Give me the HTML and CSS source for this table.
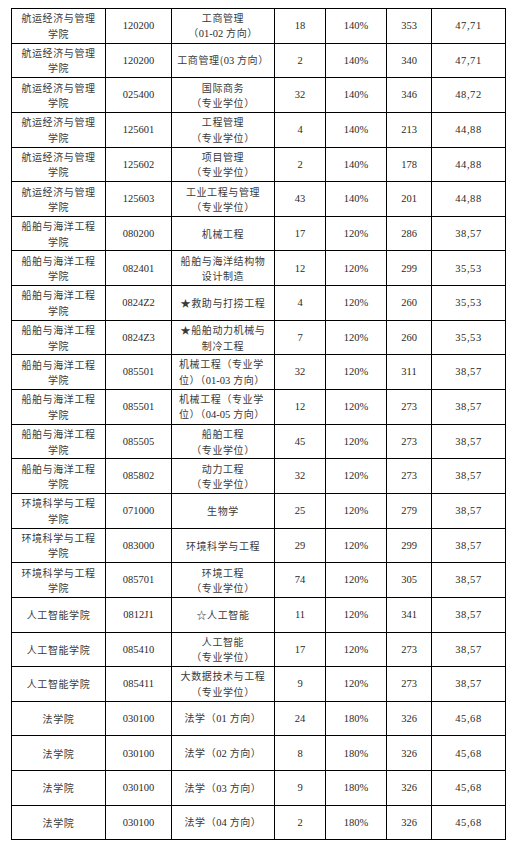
FILE: index.html
```html
<!DOCTYPE html>
<html lang="zh-CN">
<head>
<meta charset="utf-8">
<link rel="stylesheet" href="styles.css">
</head>
<body>
<table class="grid">
<colgroup>
<col class="c1"><col class="c2"><col class="c3"><col class="c4"><col class="c5"><col class="c6"><col class="c7">
</colgroup>
<tbody>
<tr><td>航运经济与管理<br>学院</td><td class="n">120200</td><td>工商管理<br>（<span class="n">01-02</span> 方向）</td><td class="n">18</td><td class="n">140%</td><td class="n">353</td><td class="n w">47,71</td></tr>
<tr><td>航运经济与管理<br>学院</td><td class="n">120200</td><td>工商管理(<span class="n">03</span> 方向）</td><td class="n">2</td><td class="n">140%</td><td class="n">340</td><td class="n w">47,71</td></tr>
<tr><td>航运经济与管理<br>学院</td><td class="n">025400</td><td>国际商务<br>（专业学位）</td><td class="n">32</td><td class="n">140%</td><td class="n">346</td><td class="n w">48,72</td></tr>
<tr><td>航运经济与管理<br>学院</td><td class="n">125601</td><td>工程管理<br>（专业学位）</td><td class="n">4</td><td class="n">140%</td><td class="n">213</td><td class="n w">44,88</td></tr>
<tr><td>航运经济与管理<br>学院</td><td class="n">125602</td><td>项目管理<br>（专业学位）</td><td class="n">2</td><td class="n">140%</td><td class="n">178</td><td class="n w">44,88</td></tr>
<tr><td>航运经济与管理<br>学院</td><td class="n">125603</td><td>工业工程与管理<br>（专业学位）</td><td class="n">43</td><td class="n">140%</td><td class="n">201</td><td class="n w">44,88</td></tr>
<tr><td>船舶与海洋工程<br>学院</td><td class="n">080200</td><td>机械工程</td><td class="n">17</td><td class="n">120%</td><td class="n">286</td><td class="n w">38,57</td></tr>
<tr><td>船舶与海洋工程<br>学院</td><td class="n">082401</td><td>船舶与海洋结构物<br>设计制造</td><td class="n">12</td><td class="n">120%</td><td class="n">299</td><td class="n w">35,53</td></tr>
<tr><td>船舶与海洋工程<br>学院</td><td class="n">0824Z2</td><td>★救助与打捞工程</td><td class="n">4</td><td class="n">120%</td><td class="n">260</td><td class="n w">35,53</td></tr>
<tr><td>船舶与海洋工程<br>学院</td><td class="n">0824Z3</td><td>★船舶动力机械与<br>制冷工程</td><td class="n">7</td><td class="n">120%</td><td class="n">260</td><td class="n w">35,53</td></tr>
<tr><td>船舶与海洋工程<br>学院</td><td class="n">085501</td><td class="left">机械工程（专业学<br>位）（<span class="n">01-03</span> 方向）</td><td class="n">32</td><td class="n">120%</td><td class="n">311</td><td class="n w">38,57</td></tr>
<tr><td>船舶与海洋工程<br>学院</td><td class="n">085501</td><td class="left">机械工程（专业学<br>位）（<span class="n">04-05</span> 方向）</td><td class="n">12</td><td class="n">120%</td><td class="n">273</td><td class="n w">38,57</td></tr>
<tr><td>船舶与海洋工程<br>学院</td><td class="n">085505</td><td>船舶工程<br>（专业学位）</td><td class="n">45</td><td class="n">120%</td><td class="n">273</td><td class="n w">38,57</td></tr>
<tr><td>船舶与海洋工程<br>学院</td><td class="n">085802</td><td>动力工程<br>（专业学位）</td><td class="n">32</td><td class="n">120%</td><td class="n">273</td><td class="n w">38,57</td></tr>
<tr><td>环境科学与工程<br>学院</td><td class="n">071000</td><td>生物学</td><td class="n">25</td><td class="n">120%</td><td class="n">279</td><td class="n w">38,57</td></tr>
<tr><td>环境科学与工程<br>学院</td><td class="n">083000</td><td>环境科学与工程</td><td class="n">29</td><td class="n">120%</td><td class="n">299</td><td class="n w">38,57</td></tr>
<tr><td>环境科学与工程<br>学院</td><td class="n">085701</td><td>环境工程<br>（专业学位）</td><td class="n">74</td><td class="n">120%</td><td class="n">305</td><td class="n w">38,57</td></tr>
<tr><td>人工智能学院</td><td class="n">0812J1</td><td>☆人工智能</td><td class="n">11</td><td class="n">120%</td><td class="n">341</td><td class="n w">38,57</td></tr>
<tr><td>人工智能学院</td><td class="n">085410</td><td>人工智能<br>（专业学位）</td><td class="n">17</td><td class="n">120%</td><td class="n">273</td><td class="n w">38,57</td></tr>
<tr><td>人工智能学院</td><td class="n">085411</td><td>大数据技术与工程<br>（专业学位）</td><td class="n">9</td><td class="n">120%</td><td class="n">273</td><td class="n w">38,57</td></tr>
<tr><td>法学院</td><td class="n">030100</td><td>法学（<span class="n">01</span> 方向）</td><td class="n">24</td><td class="n">180%</td><td class="n">326</td><td class="n w">45,68</td></tr>
<tr><td>法学院</td><td class="n">030100</td><td>法学（<span class="n">02</span> 方向）</td><td class="n">8</td><td class="n">180%</td><td class="n">326</td><td class="n w">45,68</td></tr>
<tr><td>法学院</td><td class="n">030100</td><td>法学（<span class="n">03</span> 方向）</td><td class="n">9</td><td class="n">180%</td><td class="n">326</td><td class="n w">45,68</td></tr>
<tr><td>法学院</td><td class="n">030100</td><td>法学（<span class="n">04</span> 方向）</td><td class="n">2</td><td class="n">180%</td><td class="n">326</td><td class="n w">45,68</td></tr>
</tbody>
</table>
</body>
</html>
```
FILE: styles.css
```css
html, body {
  margin: 0;
  padding: 0;
  background: #ffffff;
}
body {
  padding: 8px 0 0 11px;
}
.grid {
  border-collapse: collapse;
  table-layout: fixed;
  width: 495px;
  font-family: "Noto Sans CJK SC", "Liberation Serif", sans-serif;
  font-size: 10px;
  color: #3a3a3a;
}
.c1 { width: 94px; }
.c2 { width: 66px; }
.c3 { width: 103px; }
.c4 { width: 51px; }
.c5 { width: 61px; }
.c6 { width: 45px; }
.c7 { width: 74px; }
.grid tr {
  height: 34.65px;
}
.grid td {
  border: 1px solid #000000;
  padding: 0 2px;
  text-align: center;
  vertical-align: middle;
  line-height: 15.5px;
  letter-spacing: 0.6px;
  white-space: nowrap;
  overflow: hidden;
}
.grid .n {
  font-family: "Liberation Serif", serif;
  font-size: 10.5px;
  letter-spacing: 0;
  color: #2a2a2a;
}
.grid td.w {
  letter-spacing: 0.6px;
}
.grid td.left {
  text-align: left;
  padding-left: 7px;
}
```
